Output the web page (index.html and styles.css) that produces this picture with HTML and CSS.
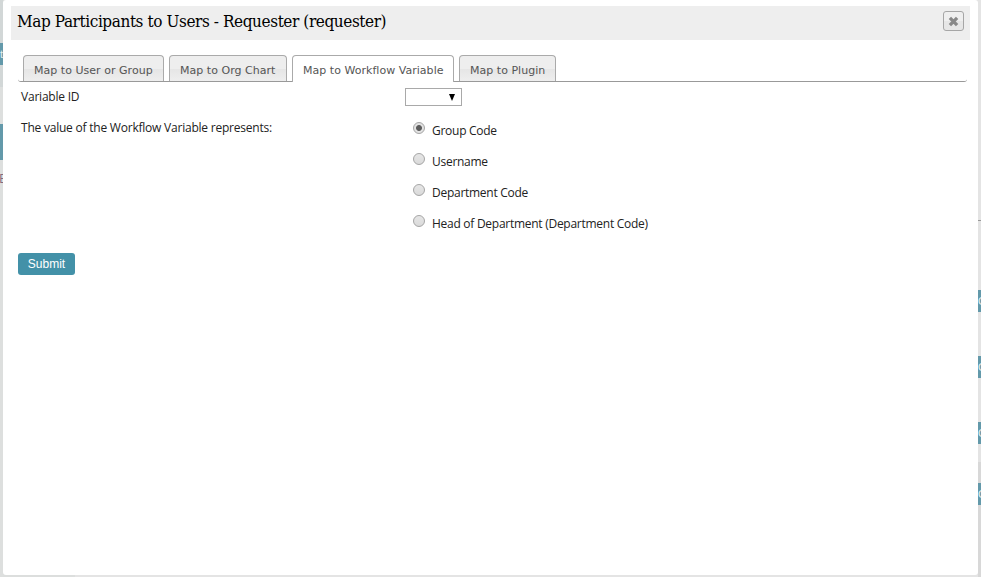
FILE: index.html
```html
<!DOCTYPE html>
<html lang="en">
<head>
<meta charset="utf-8">
<title>Map Participants to Users</title>
<link rel="stylesheet" href="styles.css">
</head>
<body>
<div class="page">
  <div class="edge edge-left">
    <span class="chip chip-nav">t</span>
    <span class="bar"></span>
    <span class="letter">E</span>
  </div>
  <main class="dialog">
    <header class="dialog-header">
      <h1>Map Participants to Users - Requester (requester)</h1>
      <button class="close" type="button" aria-label="Close">
        <svg width="11" height="11" viewBox="0 0 11 11"><path d="M1.9 1.9 9.1 9.1M9.1 1.9 1.9 9.1" stroke="#888" stroke-width="3.3"/></svg>
      </button>
    </header>
    <nav class="tabs">
      <a class="tab t1">Map to User or Group</a>
      <a class="tab t2">Map to Org Chart</a>
      <a class="tab t3 active">Map to Workflow Variable</a>
      <a class="tab t4">Map to Plugin</a>
    </nav>
    <form class="form">
      <div class="row row-select">
        <label>Variable ID</label>
        <div class="select"><svg width="6" height="7" viewBox="0 0 6 7"><path d="M0 0H6L3 7Z"/></svg></div>
      </div>
      <div class="row row-options">
        <label>The value of the Workflow Variable represents:</label>
        <div class="options">
          <div class="option"><i class="radio checked"></i><span>Group Code</span></div>
          <div class="option"><i class="radio"></i><span>Username</span></div>
          <div class="option"><i class="radio"></i><span>Department Code</span></div>
          <div class="option"><i class="radio"></i><span>Head of Department (Department Code)</span></div>
        </div>
      </div>
      <button class="submit" type="button">Submit</button>
    </form>
  </main>
  <div class="edge edge-right">
    <span class="rule"></span>
    <span class="chip c1">C</span>
    <span class="chip c2">C</span>
    <span class="chip c3">C</span>
    <span class="chip c4">C</span>
  </div>
</div>
</body>
</html>
```

FILE: styles.css
```css
* { box-sizing: border-box; }
body { margin: 0; overflow: hidden; }
.page {
  display: grid;
  grid-template-columns: 3px 975px 3px;
  height: 577px;
  background: linear-gradient(90deg, #dcdedd 0 75px, #e4e4e4 75px);
}
.edge { display: flex; flex-direction: column; overflow: hidden; height: 577px; }
.edge-left { background: linear-gradient(#d2d7d7 0 87px, #dddfde 87px); }
.edge-right { background: linear-gradient(#e4e4e4 0 462px, #d8d8d8 462px); }
.chip {
  flex: none;
  height: 22px;
  background: #6399aa;
  color: #e5eef0;
  font: 11px/22px "Liberation Sans", sans-serif;
}
.chip-nav { margin-top: 43px; }
.bar { flex: none; height: 36px; margin-top: 59px; background: #6399aa; }
.letter { margin-top: 10px; color: #856b7d; font: 13px/16px "Open Sans", sans-serif; text-indent: -1px; }
.rule { flex: none; height: 1px; margin-top: 220px; background: #999; }
.c1 { margin-top: 69px; }
.c2, .c3 { margin-top: 44px; }
.c4 { margin-top: 39px; }

.dialog {
  height: 575px;
  padding: 6px 8px 0;
  background: #fff;
  border-radius: 3px;
}
.dialog-header {
  display: flex;
  justify-content: space-between;
  height: 34px;
  padding: 5px 6px 0;
  background: #eee;
}
h1 {
  margin: 0;
  font: 17px/21px "DejaVu Serif Condensed", "DejaVu Serif", serif;
  letter-spacing: -0.41px;
  color: #000;
  white-space: nowrap;
}
.close {
  display: flex;
  align-items: center;
  justify-content: center;
  width: 21px;
  height: 20px;
  padding: 0;
  border: 1px solid #a6a6a6;
  border-radius: 3px;
  background: linear-gradient(#efefef 50%, #e6e6e6 50%);
}
.tabs {
  display: flex;
  gap: 5px;
  height: 27px;
  margin: 15px 3px 0 7px;
  padding-left: 5px;
  border-bottom: 1px solid #999;
  border-radius: 0 0 3px 3px;
}
.tab {
  height: 26px;
  padding-left: 10px;
  border: 1px solid #aaa;
  border-bottom: 0;
  border-radius: 4px 4px 0 0;
  background: linear-gradient(#eee 50%, #e5e5e5 50%, #eee);
  color: #555;
  font: 11px/29px "DejaVu Sans", sans-serif;
  letter-spacing: 0.03px;
  white-space: nowrap;
}
.t1 { width: 141px; }
.t2 { width: 118px; }
.t3 { width: 162px; }
.t4 { width: 97px; }
.tab.active { height: 27px; background: #fff; }

.form {
  padding: 6px 0 0 7px;
  font: 12px/18px "Open Sans", sans-serif;
  letter-spacing: -0.22px;
  color: #222;
}
.row { display: grid; grid-template-columns: 387px 1fr; white-space: nowrap; }
.row label { padding-left: 3px; }
.row-select { height: 31px; }
.select {
  display: flex;
  align-items: center;
  justify-content: flex-end;
  width: 57px;
  height: 18px;
  padding-right: 6px;
  border: 1px solid #a9a9a9;
  background: #fff;
}
.row-options { height: 134px; }
.options { padding: 3px 0 0 8px; letter-spacing: -0.27px; }
.option { display: flex; height: 31px; }
.radio {
  flex: none;
  width: 12px;
  height: 12px;
  margin-right: 7px;
  border: 1px solid #a5a5a5;
  border-radius: 50%;
  background: linear-gradient(#e6e6e6, #dadada);
}
.radio.checked { background: radial-gradient(circle, #5c5c5c 0 2.5px, #e2e2e2 3.4px); }
.submit {
  display: block;
  width: 57px;
  height: 22px;
  padding: 0;
  border: 0;
  border-radius: 3px;
  background: #4391a8;
  color: #fff;
  font: 12px/22px "Liberation Sans", sans-serif;
}
```
